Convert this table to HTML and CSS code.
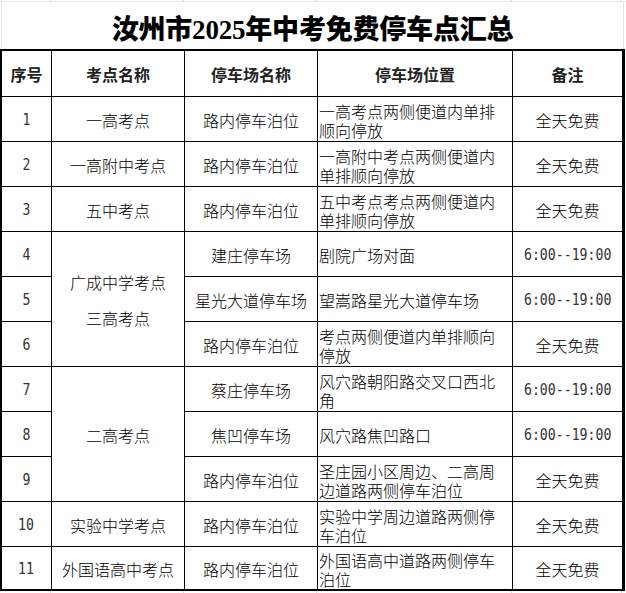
FILE: index.html
```html
<!DOCTYPE html>
<html lang="zh-CN">
<head>
<meta charset="utf-8">
<title>汝州市2025年中考免费停车点汇总</title>
<link rel="stylesheet" href="styles.css">
</head>
<body>
<div class="page">
  <div class="strip">
    <span></span><span></span><span></span><span></span><span></span>
  </div>
  <h1 class="title">汝州市2025年中考免费停车点汇总</h1>
  <div class="sheet">
    <div class="hd">序号</div>
    <div class="hd">考点名称</div>
    <div class="hd">停车场名称</div>
    <div class="hd">停车场位置</div>
    <div class="hd">备注</div>

    <div class="c num"><span class="mono">1</span></div>
    <div class="c">一高考点</div>
    <div class="c">路内停车泊位</div>
    <div class="c pos">一高考点两侧便道内单排顺向停放</div>
    <div class="c">全天免费</div>

    <div class="c num"><span class="mono">2</span></div>
    <div class="c">一高附中考点</div>
    <div class="c">路内停车泊位</div>
    <div class="c pos">一高附中考点两侧便道内单排顺向停放</div>
    <div class="c">全天免费</div>

    <div class="c num"><span class="mono">3</span></div>
    <div class="c">五中考点</div>
    <div class="c">路内停车泊位</div>
    <div class="c pos">五中考点考点两侧便道内单排顺向停放</div>
    <div class="c">全天免费</div>

    <div class="c num"><span class="mono">4</span></div>
    <div class="c merged span3">
      <div class="ml">广成中学考点</div>
      <div class="ml">三高考点</div>
    </div>
    <div class="c">建庄停车场</div>
    <div class="c pos">剧院广场对面</div>
    <div class="c"><span class="mono">6:00--19:00</span></div>

    <div class="c num"><span class="mono">5</span></div>
    <div class="c">星光大道停车场</div>
    <div class="c pos">望嵩路星光大道停车场</div>
    <div class="c"><span class="mono">6:00--19:00</span></div>

    <div class="c num"><span class="mono">6</span></div>
    <div class="c">路内停车泊位</div>
    <div class="c pos">考点两侧便道内单排顺向停放</div>
    <div class="c">全天免费</div>

    <div class="c num"><span class="mono">7</span></div>
    <div class="c span3">二高考点</div>
    <div class="c">蔡庄停车场</div>
    <div class="c pos">风穴路朝阳路交叉口西北角</div>
    <div class="c"><span class="mono">6:00--19:00</span></div>

    <div class="c num"><span class="mono">8</span></div>
    <div class="c">焦凹停车场</div>
    <div class="c pos">风穴路焦凹路口</div>
    <div class="c"><span class="mono">6:00--19:00</span></div>

    <div class="c num"><span class="mono">9</span></div>
    <div class="c">路内停车泊位</div>
    <div class="c pos">圣庄园小区周边、二高周边道路两侧停车泊位</div>
    <div class="c">全天免费</div>

    <div class="c num"><span class="mono">10</span></div>
    <div class="c">实验中学考点</div>
    <div class="c">路内停车泊位</div>
    <div class="c pos">实验中学周边道路两侧停车泊位</div>
    <div class="c">全天免费</div>

    <div class="c num"><span class="mono">11</span></div>
    <div class="c">外国语高中考点</div>
    <div class="c">路内停车泊位</div>
    <div class="c pos">外国语高中道路两侧停车泊位</div>
    <div class="c">全天免费</div>
  </div>
  <div class="strip bottom">
    <span></span><span></span><span></span><span></span><span></span>
  </div>
</div>
</body>
</html>
```

FILE: styles.css
```css
html, body {
  margin: 0;
  padding: 0;
  background: #ffffff;
}

.page {
  width: 626px;
  height: 593px;
  overflow: hidden;
  background: #ffffff;
}

.strip {
  display: grid;
  grid-template-columns: 51px 133px 133px 195px 110px;
  height: 2px;
  border-bottom: 1px solid #e4e4e4;
  box-sizing: border-box;
}

.strip span {
  border-right: 1px solid #dcdcdc;
}

.strip.bottom {
  border-bottom: none;
  height: 2px;
}

.title {
  margin: 0;
  height: 47px;
  box-sizing: border-box;
  border-left: 1px solid #e6e6e6;
  border-right: 1px solid #e6e6e6;
  margin-left: 1px;
  margin-right: 2px;
  display: flex;
  align-items: center;
  justify-content: center;
  padding-top: 3px;
  font-family: "Liberation Serif", "Noto Sans CJK SC", serif;
  font-weight: 900;
  font-size: 27px;
  letter-spacing: -0.2px;
  color: #000000;
}

.sheet {
  display: grid;
  grid-template-columns: 49px 132px 132px 194px 109px;
  grid-template-rows: 45px repeat(10, 44px) 42px;
  gap: 1px;
  background: #000000;
  padding: 2px 3px 2px 2px;
  width: fit-content;
}

.sheet > div {
  background: #ffffff;
}

.hd {
  display: flex;
  align-items: center;
  justify-content: center;
  font-family: "Noto Sans CJK SC", sans-serif;
  font-weight: 700;
  font-size: 16px;
  color: #222222;
}

.c {
  display: flex;
  align-items: center;
  justify-content: center;
  box-sizing: border-box;
  padding-top: 3px;
  font-family: "Noto Sans CJK SC", sans-serif;
  font-weight: 300;
  font-size: 16px;
  line-height: 19px;
  color: #000000;
  text-align: center;
}

.c.pos {
  justify-content: flex-start;
  text-align: left;
  padding-left: 1px;
  padding-right: 10px;
}

.span3 {
  grid-row: span 3;
}

.merged {
  flex-direction: column;
  gap: 17px;
}

.mono {
  display: inline-block;
  font-family: "DejaVu Sans Mono", monospace;
  font-size: 15px;
  font-weight: 400;
  color: #333333;
  transform: scaleX(0.88);
}
```
